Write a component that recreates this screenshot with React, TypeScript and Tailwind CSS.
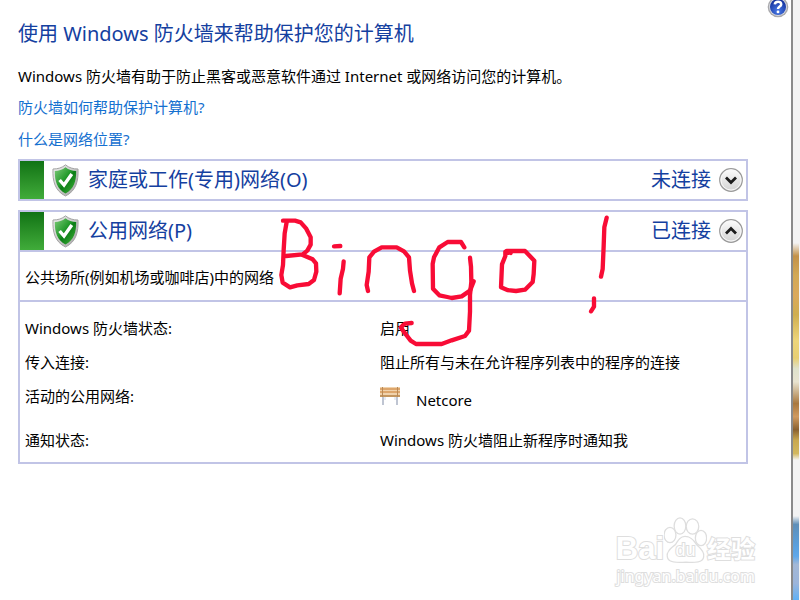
import { useState } from "react";

function HelpIcon() {
  return (
    <svg viewBox="0 0 22 22" className="w-[22px] h-[22px]">
      <defs>
        <radialGradient id="help" cx="50%" cy="75%" r="70%">
          <stop offset="0" stopColor="#4a7be8" />
          <stop offset="1" stopColor="#12309c" />
        </radialGradient>
      </defs>
      <circle cx="11" cy="11" r="10.3" fill="#a9a9ac" />
      <circle cx="11" cy="11" r="9" fill="#d6d8e0" />
      <circle cx="11" cy="11" r="8" fill="url(#help)" />
      <path
        d="M7.8 8.4 C8 4.8 14.2 4.8 14.2 8.4 C14.2 10.6 11 10.6 11 13"
        fill="none"
        stroke="#fff"
        strokeWidth="2.5"
      />
      <circle cx="11" cy="15.9" r="1.4" fill="#fff" />
    </svg>
  );
}

function ShieldIcon() {
  return (
    <svg viewBox="0 0 27 33" className="w-[27px] h-[33px] shrink-0">
      <defs>
        <linearGradient id="shieldRim" x1="0" y1="0" x2="1" y2="1">
          <stop offset="0" stopColor="#f0f0f0" />
          <stop offset="1" stopColor="#a2a2a2" />
        </linearGradient>
        <linearGradient id="shieldFill" x1="0" y1="0" x2="1" y2="1">
          <stop offset="0" stopColor="#7fcb7a" />
          <stop offset="0.45" stopColor="#239a2b" />
          <stop offset="0.55" stopColor="#0c7d17" />
          <stop offset="1" stopColor="#45b63a" />
        </linearGradient>
      </defs>
      <path
        d="M13.5 0.8 C17 3.8 21 5 26 5 C26.6 17 24 27 13.5 32 C3 27 0.4 17 1 5 C6 5 10 3.8 13.5 0.8 Z"
        fill="url(#shieldRim)"
        stroke="#a4a4a4"
        strokeWidth="1"
      />
      <path
        d="M13.5 3.2 C16.8 5.8 20 6.8 24.2 7 C24.3 17 21.8 25.2 13.5 29.6 C5.2 25.2 2.7 17 2.8 7 C7 6.8 10.2 5.8 13.5 3.2 Z"
        fill="url(#shieldFill)"
      />
      <path
        d="M7.6 16 L12 21 L19.8 10"
        fill="none"
        stroke="#fff"
        strokeWidth="3.4"
      />
    </svg>
  );
}

function BenchIcon() {
  return (
    <svg viewBox="0 0 20 20" className="w-5 h-5 shrink-0">
      <rect x="0" y="1" width="20" height="10" fill="#f0d2ac" />
      <rect x="0" y="2" width="20" height="2" fill="#dda66c" />
      <rect x="0" y="5" width="20" height="2" fill="#dda66c" />
      <rect x="0" y="9" width="20" height="2" fill="#c4965f" />
      <path d="M2.5 1 V11 M17.5 1 V11" stroke="#b98a56" strokeWidth="1" />
      <path d="M3 11 V19 M17 11 V19" stroke="#aab3c4" strokeWidth="1.5" />
      <path d="M5 11 V14 M15 11 V14" stroke="#d0d6e0" strokeWidth="1" />
    </svg>
  );
}

function ChevronIcon({ open }: { open: boolean }) {
  return (
    <svg viewBox="0 0 24 24" className="w-6 h-6">
      <defs>
        <linearGradient id="knob" x1="0" y1="0" x2="0" y2="1">
          <stop offset="0" stopColor="#fdfdfd" />
          <stop offset="1" stopColor="#d2d2d2" />
        </linearGradient>
      </defs>
      <circle cx="12" cy="12" r="11.3" fill="url(#knob)" stroke="#9a9a9a" strokeWidth="1.2" />
      <circle cx="12" cy="12" r="10" fill="none" stroke="#f8f8f8" strokeWidth="1" />
      <path
        d={open ? "M7 14.5 L12 9.5 L17 14.5" : "M7 9.5 L12 14.5 L17 9.5"}
        fill="none"
        stroke="#1c1c1c"
        strokeWidth="2.8"
      />
    </svg>
  );
}

function Scribble() {
  return (
    <svg
      viewBox="0 0 1050 480"
      className="absolute left-[270px] top-[200px] w-[350px] h-[160px] pointer-events-none"
      fill="none"
      stroke="#f80c36"
      strokeWidth="13"
      strokeLinecap="round"
      strokeLinejoin="round"
    >
      <polyline points="39,62 75,62 92,67 108,85 122,112 122,134 112,152 98,163 48,168" />
      <polyline points="50,66 44,100 41,150 39,195 34,225 38,248 60,262 82,256 116,252 132,240 139,215 138,190 128,178 98,165" />
      <polyline points="192,139 211,138" />
      <polyline points="221,184 219,206 212,236 209,280" />
      <polyline points="294,273 290,255 296,215 298,172 312,155 335,142 380,142 402,154 417,172 420,212 426,250 432,273" />
      <polyline points="583,142 573,126 533,126 508,142 492,172 488,192 489,266 508,286 532,291 545,294 575,289 600,272 611,244" />
      <polyline points="600,173 603,200 604,245 600,285 600,335 597,392 585,408 545,421 515,432 438,432 422,422 402,396 392,382 405,371 425,369" />
      <polyline points="722,159 706,155 706,168 696,193 693,262 712,270 738,273 765,269 788,246 791,222 793,182 765,153 710,153" />
      <polyline points="1010,53 1003,82 1001,138 998,207 993,230" />
      <polyline points="972,295 972,320 963,334" />
    </svg>
  );
}

function Watermark() {
  return (
    <div className="absolute right-[45px] bottom-4 flex flex-col items-end text-white [-webkit-text-stroke:2px_#dedede] [paint-order:stroke_fill]">
      <div className="flex items-end">
        <span className="font-['Liberation_Sans',sans-serif] font-bold text-[31px] leading-[30px]">Bai</span>
        <div className="relative w-[43px] h-[47px]">
          <svg viewBox="0 0 43 47" className="absolute inset-0" fill="#fff" stroke="#dedede" strokeWidth="2.6">
            <ellipse cx="6" cy="18" rx="5.3" ry="7" />
            <ellipse cx="16" cy="9" rx="5.2" ry="7.4" />
            <ellipse cx="28.5" cy="9.5" rx="5.6" ry="7" />
            <ellipse cx="37" cy="21" rx="5" ry="7" />
            <path d="M21 20 C26 20 29 23 32 28 C36 32 40 35 39 40 C38 45 32 45 22 44.5 C12 45 5 45 4 40 C3 35 7 32 12 28 C15 23 17 20 21 20 Z" />
          </svg>
          <span className="absolute inset-x-0 bottom-1 text-center font-['Liberation_Sans',sans-serif] text-lg leading-5">
            du
          </span>
        </div>
        <span className="font-bold text-2xl leading-[30px]">经验</span>
      </div>
      <span className="mt-1 font-['Noto_Sans',sans-serif] text-base leading-4">jingyan.baidu.com</span>
    </div>
  );
}

function NetworkHeader({
  title,
  status,
  open,
  onToggle,
}: {
  title: string;
  status: string;
  open: boolean;
  onToggle: () => void;
}) {
  return (
    <div className="flex items-center h-[38px] pr-[3px] text-xl text-[#1440a0]">
      <div className="w-6 h-full shrink-0 mr-2 bg-linear-to-b from-[#0f7314] to-[#40ac3a]" />
      <ShieldIcon />
      <h2 className="ml-[9px] flex-1">{title}</h2>
      <span className="mr-2">{status}</span>
      <button onClick={onToggle} aria-label={title} aria-expanded={open} className="cursor-pointer">
        <ChevronIcon open={open} />
      </button>
    </div>
  );
}

export default function App() {
  const [homeOpen, setHomeOpen] = useState(false);
  const [publicOpen, setPublicOpen] = useState(true);

  return (
    <div className="relative flex min-h-screen overflow-hidden bg-white text-black text-[15px] leading-5 font-['Noto_Sans','Noto_Sans_CJK_SC',sans-serif]">
      <main className="flex-1 pl-[18px] pr-[43px] pt-[18px]">
        <h1 className="text-xl leading-8 text-[#1440a0]">使用 Windows 防火墙来帮助保护您的计算机</h1>
        <p className="mt-4">
          Windows 防火墙有助于防止黑客或恶意软件通过 Internet 或网络访问您的计算机。
        </p>
        <div className="mt-[11px] flex flex-col items-start gap-3 text-[#1470d0]">
          <a href="#protect">防火墙如何帮助保护计算机?</a>
          <a href="#location">什么是网络位置?</a>
        </div>

        <section className="mt-[10px] border-2 border-[#c1c4e6]">
          <NetworkHeader
            title="家庭或工作(专用)网络(O)"
            status="未连接"
            open={homeOpen}
            onToggle={() => setHomeOpen(!homeOpen)}
          />
        </section>

        <section className="mt-[9px] border-2 border-[#c1c4e6]">
          <NetworkHeader
            title="公用网络(P)"
            status="已连接"
            open={publicOpen}
            onToggle={() => setPublicOpen(!publicOpen)}
          />
          {publicOpen && (
            <>
              <p className="border-y-2 border-[#c1c4e6] px-[5px] pt-[15px] pb-[13px]">
                公共场所(例如机场或咖啡店)中的网络
              </p>
              <dl className="grid grid-cols-[355px_1fr] gap-y-[14px] px-[5px] pt-4 pb-3">
                <dt>Windows 防火墙状态:</dt>
                <dd>启用</dd>
                <dt>传入连接:</dt>
                <dd>阻止所有与未在允许程序列表中的程序的连接</dd>
                <dt>活动的公用网络:</dt>
                <dd className="flex gap-4 pb-[6px]">
                  <BenchIcon />
                  <span className="pt-1">Netcore</span>
                </dd>
                <dt>通知状态:</dt>
                <dd>Windows 防火墙阻止新程序时通知我</dd>
              </dl>
            </>
          )}
        </section>
      </main>

      {/* edge of the window with the desktop behind it */}
      <div className="w-[9px] shrink-0 flex flex-col border-l-2 border-[#8a8a8a] pr-px bg-[#f3f3f3]">
        <div className="h-[243px]" />
        <div className="h-[217px] bg-[linear-gradient(#f3f3f3,#c39148_6%,#d2a955_15%,#dba95b_24%,#cfae50_33%,#edd57a_45%,#e8cf73_53%,#dfe2cc_58%,#e8e3d0_64%,#a9783e_74%,#d09a5f_80%,#8a6130_86%,#c9a84f_91%,#d2b85f_97%,#f3f3f3)]" />
        <div className="h-[56px]" />
        <div className="flex-1 bg-[linear-gradient(#f3f3f3,#5f8fb8_10%,#5a9fdc_35%,#5fa8ea_48%,#a3b8d6_58%,#9cb5da_80%,#5fb0f5)]" />
      </div>

      <div className="absolute right-[11px] -top-1">
        <HelpIcon />
      </div>
      <Scribble />
      <Watermark />
    </div>
  );
}
